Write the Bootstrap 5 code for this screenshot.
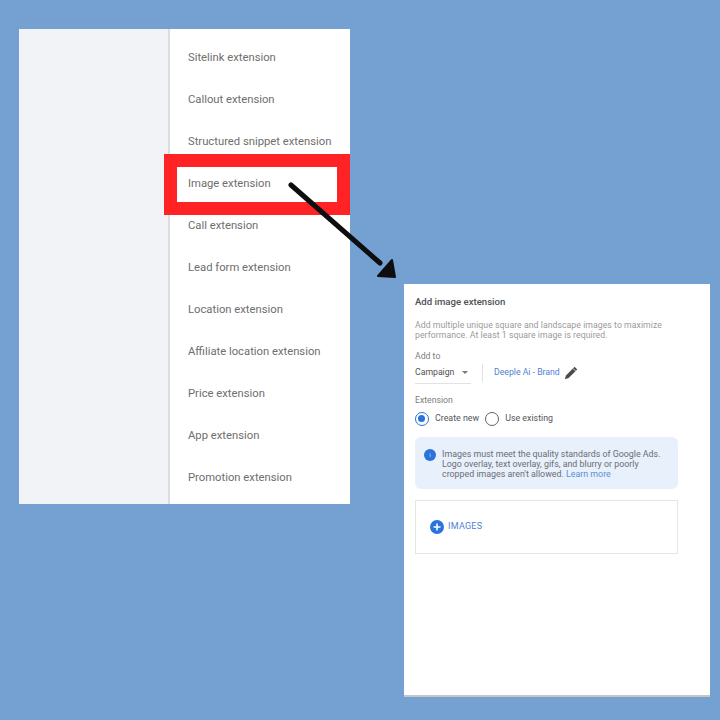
<!DOCTYPE html>
<html lang="en">
<head>
  <meta charset="UTF-8" />
  <title>Add image extension</title>
  <meta name="viewport" content="width=device-width, initial-scale=1.0" />
  <link href="https://cdn.jsdelivr.net/npm/bootstrap@5.3.3/dist/css/bootstrap.min.css" rel="stylesheet">
  <style>
    body { background: #74a0d2; width: 720px; height: 720px; overflow: hidden; position: relative; font-family: Roboto, "Liberation Sans", sans-serif; }

    /* collage pieces */
    .menu-shot { position: absolute; left: 19px; top: 29px; width: 331px; height: 475px; background: #fff; }
    .menu-side { width: 151px; background: #f1f3f6; border-right: 2px solid #dcdddf; }
    .menu-items { padding: 8px 0 0 18px; }
    .menu-item { height: 42px; line-height: 42px; font-size: 11.25px; color: #6e6e6e; white-space: nowrap; }

    .red-box { position: absolute; left: 164px; top: 154px; width: 186px; height: 61px; border: 13px solid #ff2326; }
    .arrow-svg { position: absolute; left: 280px; top: 175px; }

    .form-shot { position: absolute; left: 404px; top: 284px; width: 306px; height: 413px; background: #fff; border-bottom: 2px solid #c6c6c6; padding: 11px 32px 0 11px; color: #6f6f6f; font-size: 8.7px; }
    .form-title { font-size: 9.6px; font-weight: 500; line-height: 13px; color: #4d5054; }
    .form-help { margin-top: 12px; line-height: 10px; color: #9a9a9a; letter-spacing: .05px; }
    .form-label-sm { line-height: 11px; color: #7d7d7d; }
    .add-to { margin-top: 11px; }
    .ext-label { margin-top: 11px; }
    .campaign-pick { width: 56px; height: 17px; line-height: 13px; margin-top: 4px; border-bottom: 1px solid #e2e2e2; color: #4f4f4f; box-sizing: content-box; }
    .caret-down { display: inline-block; margin: 0 0 1px 5px; border-left: 3.5px solid transparent; border-right: 3.5px solid transparent; border-top: 3px solid #777; }
    .v-rule { width: 1px; height: 18px; background: #e2e2e2; margin: 2px 11px 0; }
    .brand-link { line-height: 13px; margin-top: 4px; color: #4d82d6; }
    .radio-row { margin-top: 6px; }
    .radio-on, .radio-off { width: 14px; height: 14px; border-radius: 50%; flex: none; }
    .radio-on { border: 1.5px solid #2a72dc; padding: 2px; }
    .radio-on::after { content: ""; display: block; width: 7px; height: 7px; border-radius: 50%; background: #2a72dc; }
    .radio-off { border: 1.5px solid #5f6368; }
    .radio-text { margin: 0 6px; color: #565656; font-size: 8.85px; }
    .info-note { height: 52px; margin-top: 11px; padding: 12px 8px 0 9px; background: #e8f0fc; border-radius: 6px; line-height: 10px; color: #6b6e73; font-size: 8.85px; }
    .info-dot { width: 12px; height: 12px; border-radius: 50%; background: #2a72dc; color: #cfe0fb; font-size: 6px; line-height: 12px; text-align: center; flex: none; }
    .note-text { padding-left: 2px; }
    .learn-more { color: #5b8fd9; }
    .images-box { height: 54px; margin-top: 11px; padding-left: 14px; border: 1px solid #e6e6e6; }
    .plus-dot { width: 14px; height: 14px; border-radius: 50%; background: #2a72dc; flex: none; }
    .images-text { color: #4d82d6; font-size: 9px; letter-spacing: .25px; }
  </style>
</head>
<body>

<!-- left screenshot -->
<div class="menu-shot d-flex">
  <div class="menu-side"></div>
  <div class="menu-items flex-grow-1">
    <div class="menu-item">Sitelink extension</div>
    <div class="menu-item">Callout extension</div>
    <div class="menu-item">Structured snippet extension</div>
    <div class="menu-item">Image extension</div>
    <div class="menu-item">Call extension</div>
    <div class="menu-item">Lead form extension</div>
    <div class="menu-item">Location extension</div>
    <div class="menu-item">Affiliate location extension</div>
    <div class="menu-item">Price extension</div>
    <div class="menu-item">App extension</div>
    <div class="menu-item">Promotion extension</div>
  </div>
</div>

<!-- right screenshot -->
<div class="form-shot">
  <div class="form-title">Add image extension</div>
  <div class="form-help">Add multiple unique square and landscape images to maximize performance. At least 1 square image is required.</div>
  <div class="form-label-sm add-to">Add to</div>
  <div class="d-flex">
    <div class="campaign-pick">Campaign <span class="caret-down"></span></div>
    <div class="v-rule"></div>
    <div class="brand-link">Deeple Ai - Brand</div>
    <svg class="ms-1 mt-1" width="14" height="14" viewBox="0 0 14 14"><path d="M10.6 .8 13.2 3.4 4.6 12 .8 13.2 2 9.4Z" fill="#4a4a4a"/><path d="M9 2.4 11.6 5" stroke="#fff" stroke-width=".8"/></svg>
  </div>
  <div class="form-label-sm ext-label">Extension</div>
  <div class="radio-row d-flex align-items-center">
    <span class="radio-on"></span>
    <span class="radio-text">Create new</span>
    <span class="radio-off"></span>
    <span class="radio-text">Use existing</span>
  </div>
  <div class="info-note d-flex gap-1">
    <span class="info-dot">i</span>
    <div class="note-text">Images must meet the quality standards of Google Ads. Logo overlay, text overlay, gifs, and blurry or poorly cropped images aren't allowed. <span class="learn-more">Learn more</span></div>
  </div>
  <div class="images-box d-flex align-items-center gap-1">
    <svg class="plus-dot" viewBox="0 0 14 14"><path d="M7 3.5v7M3.5 7h7" stroke="#fff" stroke-width="1.6"/></svg>
    <span class="images-text">IMAGES</span>
  </div>
</div>

<!-- annotations over the screenshots -->
<div class="red-box"></div>
<svg class="arrow-svg" width="120" height="110" viewBox="0 0 120 110">
  <path d="M11 10 100 88" stroke="#0e0e10" stroke-width="5" stroke-linecap="round"/>
  <path d="M112 85 115 102 98 101Z" fill="#0e0e10" stroke="#0e0e10" stroke-width="2" stroke-linejoin="round"/>
</svg>

</body>
</html>
